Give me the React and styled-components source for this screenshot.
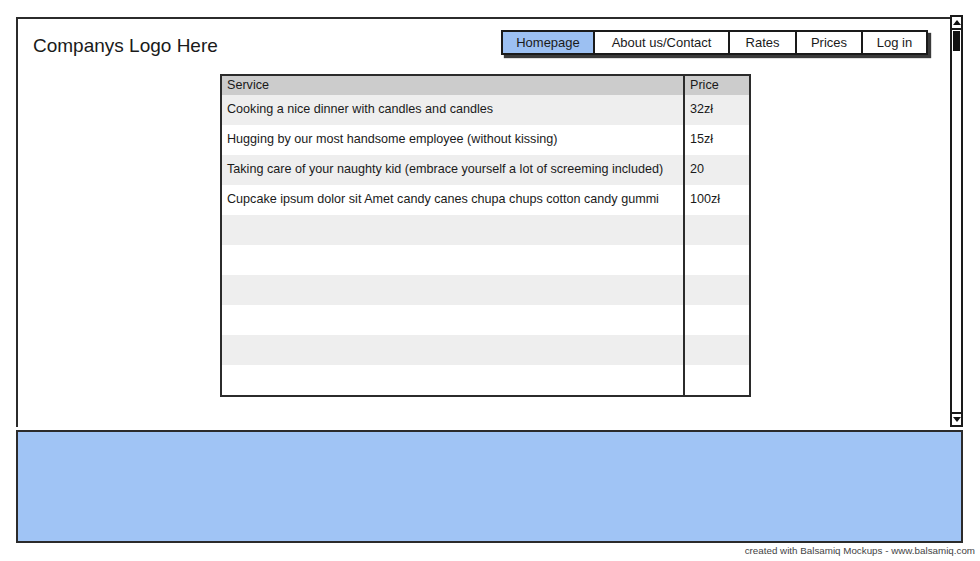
import React from 'react';
import styled, { createGlobalStyle } from 'styled-components';

const GlobalStyle = createGlobalStyle`
  body {
    margin: 0;
    background: #ffffff;
    font-family: 'Liberation Sans', Arial, sans-serif;
    color: #1a1a1a;
  }
`;

const Page = styled.div`
  width: 980px;
  height: 561px;
  padding: 15px 0 0 16px;
  box-sizing: border-box;
  overflow: hidden;
`;

const Window = styled.div`
  display: flex;
  width: 947px;
  height: 412px;
`;

const Content = styled.div`
  flex: 1;
  margin-top: 2px;
  border: 2px solid #2b2b2b;
  border-right: none;
  border-bottom: none;
  display: flex;
  flex-direction: column;
`;

const Header = styled.div`
  display: flex;
  justify-content: space-between;
  align-items: flex-start;
  padding: 11px 22px 0 15px;
`;

const Logo = styled.div`
  font-size: 19px;
  line-height: 24px;
  margin-top: 4px;
`;

const Nav = styled.div`
  display: flex;
  border: 2px solid #1a1a1a;
  box-shadow: 3px 3px 1px #3a3a3a;
`;

const NavButton = styled.div`
  width: ${(p) => p.w}px;
  height: 21px;
  line-height: 21px;
  text-align: center;
  font-size: 13px;
  background: ${(p) => (p.active ? '#9cc0f2' : '#ffffff')};
  border-left: ${(p) => (p.first ? 'none' : '2px solid #1a1a1a')};
  box-sizing: border-box;
`;

const TableWrap = styled.div`
  margin: 16px 0 0 202px;
  width: 531px;
  border: 2px solid #2b2b2b;
  display: grid;
  grid-template-columns: 461px 1fr;
  font-size: 12.6px;
  box-sizing: border-box;
`;

const Cell = styled.div`
  height: ${(p) => (p.head ? 19 : 30)}px;
  line-height: ${(p) => (p.head ? 19 : 28)}px;
  padding-left: 5px;
  background: ${(p) => p.bg};
  border-left: ${(p) => (p.price ? '2px solid #2b2b2b' : 'none')};
  white-space: nowrap;
  overflow: hidden;
`;

const Scrollbar = styled.div`
  width: 13px;
  border: 2px solid #1a1a1a;
  box-sizing: border-box;
  display: flex;
  flex-direction: column;
  background: #ffffff;
`;

const Arrow = styled.div`
  height: 11px;
  display: flex;
  align-items: center;
  justify-content: center;
  border-bottom: ${(p) => (p.up ? '2px solid #1a1a1a' : 'none')};
  border-top: ${(p) => (p.up ? 'none' : '2px solid #1a1a1a')};
  &::after {
    content: '';
    border-left: 4px solid transparent;
    border-right: 4px solid transparent;
    ${(p) =>
      p.up ? 'border-bottom: 5px solid #111;' : 'border-top: 5px solid #111;'}
  }
`;

const Track = styled.div`
  flex: 1;
  padding: 1px 1px;
`;

const Thumb = styled.div`
  height: 20px;
  background: #111111;
`;

const Footer = styled.div`
  margin-top: 3px;
  width: 947px;
  height: 113px;
  background: #a0c4f5;
  border: 2px solid #2b2b2b;
  box-sizing: border-box;
`;

const Caption = styled.div`
  width: 959px;
  text-align: right;
  font-size: 9.8px;
  color: #444444;
  margin-top: 2px;
`;

const navItems = [
  { label: 'Homepage', w: 90, active: true },
  { label: 'About us/Contact', w: 135 },
  { label: 'Rates', w: 67 },
  { label: 'Prices', w: 66 },
  { label: 'Log in', w: 65 },
];

const rows = [
  ['Cooking a nice dinner with candles and candles', '32zł'],
  ['Hugging by our most handsome employee (without kissing)', '15zł'],
  ['Taking care of your naughty kid (embrace yourself a lot of screeming included)', '20'],
  ['Cupcake ipsum dolor sit Amet candy canes chupa chups cotton candy gummi', '100zł'],
  ['', ''],
  ['', ''],
  ['', ''],
  ['', ''],
  ['', ''],
  ['', ''],
];

function App() {
  return (
    <Page>
      <GlobalStyle />
      <Window>
        <Content>
          <Header>
            <Logo>Companys Logo Here</Logo>
            <Nav>
              {navItems.map((n, i) => (
                <NavButton key={n.label} w={n.w} active={n.active} first={i === 0}>
                  {n.label}
                </NavButton>
              ))}
            </Nav>
          </Header>
          <TableWrap>
            <Cell head bg="#cccccc">Service</Cell>
            <Cell head price bg="#cccccc">Price</Cell>
            {rows.map((r, i) => {
              const bg = i % 2 === 0 ? '#eeeeee' : '#ffffff';
              return (
                <React.Fragment key={i}>
                  <Cell bg={bg}>{r[0]}</Cell>
                  <Cell price bg={bg}>{r[1]}</Cell>
                </React.Fragment>
              );
            })}
          </TableWrap>
        </Content>
        <Scrollbar>
          <Arrow up />
          <Track>
            <Thumb />
          </Track>
          <Arrow />
        </Scrollbar>
      </Window>
      <Footer />
      <Caption>created with Balsamiq Mockups - www.balsamiq.com</Caption>
    </Page>
  );
}

export default App;
